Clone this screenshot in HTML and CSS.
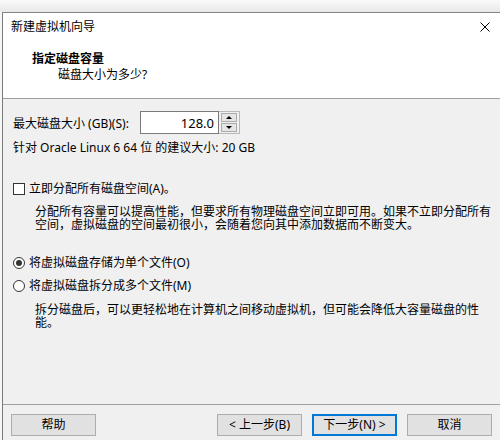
FILE: index.html
```html
<!DOCTYPE html>
<html lang="zh-CN">
<head>
<meta charset="utf-8">
<title>新建虚拟机向导</title>
<link rel="stylesheet" href="styles.css">
</head>
<body>
<div class="topstrip"></div>
<div class="window">
  <div class="titlebar">
    <span class="title">新建虚拟机向导</span>
    <svg class="close" width="10" height="10" viewBox="0 0 10 10"><path d="M0.5 0.5 L9.5 9.5 M9.5 0.5 L0.5 9.5" stroke="#000" stroke-width="1" fill="none"/></svg>
  </div>
  <div class="header">
    <div class="h-title">指定磁盘容量</div>
    <div class="h-sub">磁盘大小为多少?</div>
  </div>
  <div class="content">
    <div class="size-row">
      <span class="size-label">最大磁盘大小 (GB)(S):</span>
      <div class="spin">
        <div class="spin-input">128.0</div>
        <div class="spin-btns">
          <span class="spin-btn"><span class="tri-up"></span></span>
          <span class="spin-btn"><span class="tri-down"></span></span>
        </div>
      </div>
    </div>
    <div class="hint">针对 Oracle Linux 6 64 位 的建议大小: 20 GB</div>
    <div class="check-row"><span class="checkbox"></span><span>立即分配所有磁盘空间(A)。</span></div>
    <p class="desc desc-1">分配所有容量可以提高性能，但要求所有物理磁盘空间立即可用。如果不立即分配所有空间，虚拟磁盘的空间最初很小，会随着您向其中添加数据而不断变大。</p>
    <div class="radio-row radio-1"><span class="radio checked"></span><span>将虚拟磁盘存储为单个文件(O)</span></div>
    <div class="radio-row radio-2"><span class="radio"></span><span>将虚拟磁盘拆分成多个文件(M)</span></div>
    <p class="desc desc-2">拆分磁盘后，可以更轻松地在计算机之间移动虚拟机，但可能会降低大容量磁盘的性能。</p>
  </div>
  <div class="footer">
    <button class="btn">帮助</button>
    <div class="nav">
      <button class="btn">&lt; 上一步(B)</button>
      <button class="btn default">下一步(N) &gt;</button>
      <button class="btn">取消</button>
    </div>
  </div>
</div>
</body>
</html>
```

FILE: styles.css
```css
* { box-sizing: border-box; }
html, body {
  margin: 0;
  padding: 0;
  width: 500px;
  height: 440px;
  overflow: hidden;
  background: #f6f6f6;
  font-family: "Noto Sans", "Noto Sans CJK SC", sans-serif;
  font-size: 12px;
  color: #000;
}
.topstrip {
  height: 12px;
  background: linear-gradient(#fafafa, #e8e8e8);
}
.window {
  margin-left: 2px;
  height: 428px;
  border-top: 1px solid #858585;
  border-left: 1px solid #7a7a7a;
  background: #f0f0f0;
  display: flex;
  flex-direction: column;
}
.titlebar {
  height: 28px;
  background: #fff;
  display: flex;
  align-items: center;
  justify-content: space-between;
  padding: 0 10px 0 8px;
  line-height: 16px;
}
.close { display: block; }
.header {
  height: 58px;
  background: #fff;
  border-bottom: 1px solid #a0a0a0;
  padding: 10px 0 0 29px;
  line-height: 16px;
}
.h-title { font-weight: bold; }
.h-sub { margin-left: 26px; }
.content {
  height: 306px;
  border-bottom: 1px solid #a0a0a0;
  padding: 12px 4px 0 10px;
  line-height: 16px;
}
.size-row {
  display: flex;
  align-items: center;
  height: 23px;
}
.size-label {
  width: 127px;
  padding-top: 2px;
}
.spin {
  display: flex;
  height: 23px;
}
.spin-input {
  width: 79px;
  height: 23px;
  background: #fff;
  border: 1px solid #7a7a7a;
  text-align: right;
  padding: 3px 4px 0 0;
  font-size: 13px;
  line-height: 16px;
}
.spin-btns {
  width: 21px;
  height: 23px;
  border: 1px solid #b9b9b9;
  border-left: none;
  padding: 1px 2px;
  display: flex;
  flex-direction: column;
  gap: 1px;
}
.spin-btn {
  flex: 1;
  background: #e5e5e5;
  border: 1px solid #acacac;
  display: flex;
  align-items: center;
  justify-content: center;
}
.tri-up {
  width: 0; height: 0;
  border-left: 3px solid transparent;
  border-right: 3px solid transparent;
  border-bottom: 3px solid #000;
}
.tri-down {
  width: 0; height: 0;
  border-left: 3px solid transparent;
  border-right: 3px solid transparent;
  border-top: 3px solid #000;
}
.hint { margin-top: 6px; }
.check-row {
  margin-top: 25px;
  display: flex;
  align-items: center;
  gap: 4px;
}
.checkbox {
  width: 12px;
  height: 12px;
  border: 1px solid #333;
  background: #fff;
  flex: none;
}
.desc {
  margin: 8px 0 0 22px;
  line-height: 13px;
}
.radio-row {
  display: flex;
  align-items: center;
  gap: 4px;
}
.radio-1 { margin-top: 24px; }
.radio-2 { margin-top: 7px; }
.radio {
  width: 12px;
  height: 12px;
  border: 1px solid #333;
  border-radius: 50%;
  background: #fff;
  flex: none;
  display: flex;
  align-items: center;
  justify-content: center;
}
.radio.checked::after {
  content: "";
  width: 6px;
  height: 6px;
  border-radius: 50%;
  background: #333;
}
.desc-2 { margin-top: 9px; }
.footer {
  display: flex;
  justify-content: space-between;
  padding: 9px 8px 0 8px;
}
.nav {
  display: flex;
  gap: 10px;
}
.btn {
  width: 85px;
  height: 22px;
  background: #e1e1e1;
  border: 1px solid #adadad;
  font-family: inherit;
  font-size: 12px;
  line-height: 16px;
  color: #000;
  padding: 0;
  margin: 0;
}
.btn.default {
  border: 2px solid #0078d7;
}
```
